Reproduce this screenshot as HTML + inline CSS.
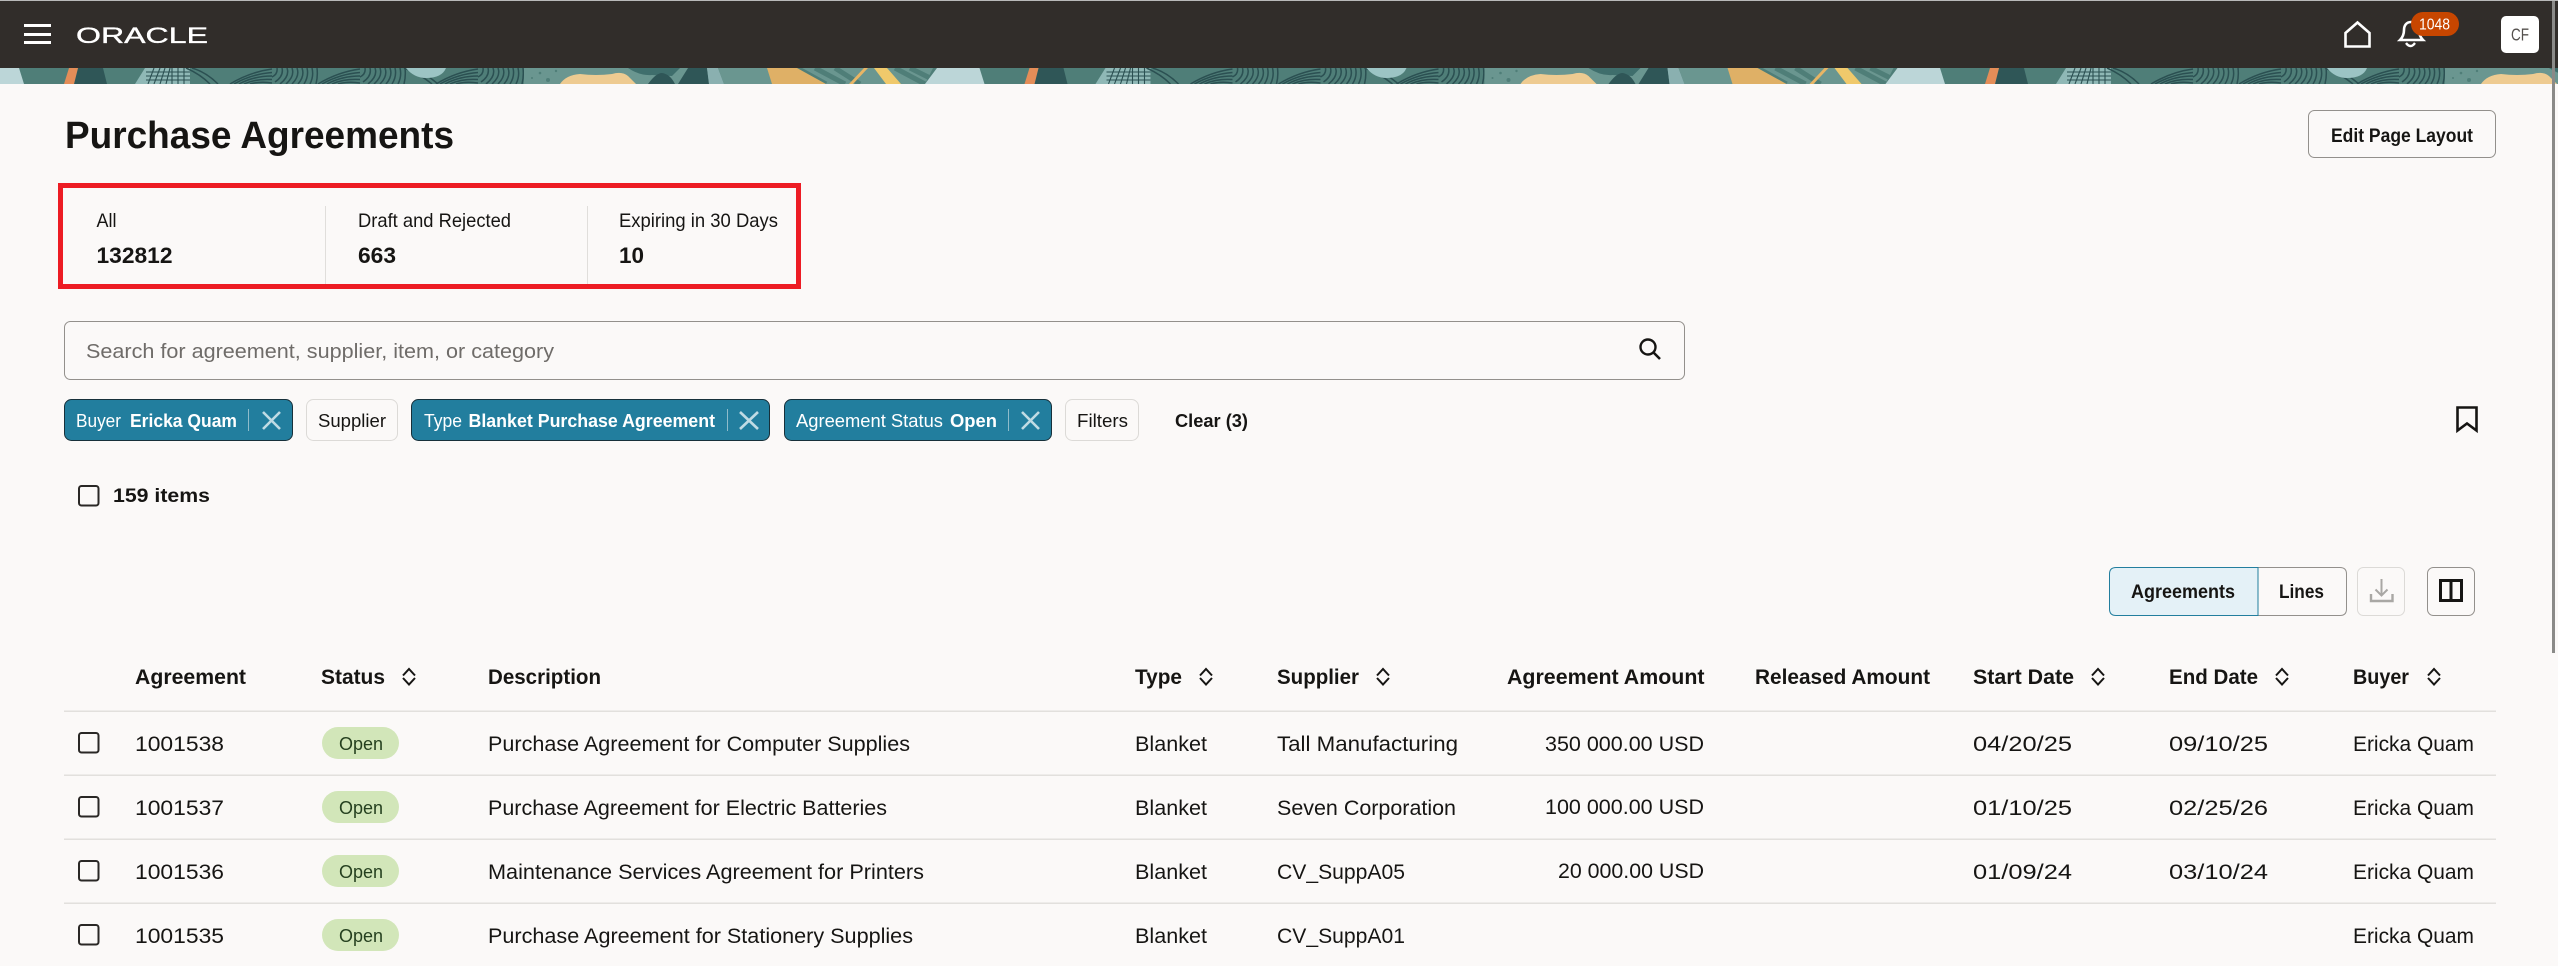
<!DOCTYPE html>
<html lang="en">
<head>
<meta charset="utf-8">
<title>Purchase Agreements</title>
<style>
html,body{margin:0;padding:0;background:#fbf9f8;overflow:hidden}
svg{display:block}
text{font-family:"Liberation Sans",Arial,sans-serif;fill:#161513;font-size:21px}
.b{font-weight:700}
.c{font-size:18.5px}
.w{fill:#fff;font-size:18.5px}
.h{font-size:21px;font-weight:700}
.o{font-size:18px;fill:#25401f}
.l{font-size:19.5px}
.v{font-size:22px;font-weight:700}
.m{font-size:19.5px;font-weight:700}
</style>
</head>
<body>
<svg xmlns="http://www.w3.org/2000/svg" width="2558" height="966" viewBox="0 0 2558 966">
<defs>
  <clipPath id="bn"><rect x="0" y="68" width="2558" height="16"/></clipPath>
  <g id="arcs" fill="none" stroke="#2b5052" stroke-width="1.5">
    <path d="M0 16Q20 4 42 1M4 16Q22 6 42 4.500M9 16Q24 8 42 8M14 16Q26 10.500 42 11.500M20 16Q30 13 42 15"/>
    <path d="M42 9Q48 6 47 0M45 14Q54 8 52 0M50 16Q60 8 57 0M56 16Q65 8 62 0M62 16Q70 8 67 0M68 16Q75 8 72 0M74 16Q79 8 77 0M80 16Q84 8 82 0M86 16Q88 8 87 0"/>
  </g>
  <g id="tile">
    <rect x="0" y="0" width="960.500" height="16" fill="#4f7e78"/>
    <polygon points="-23,0 19,0 24,16 -35,16" fill="#bcd6d8"/>
    <polygon points="78,0 103,0 107,16 74,16" fill="#2f5657"/>
    <polygon points="69,0 78,0 74,16 64,16" fill="#e48d58"/>
    <polygon points="145,0 190,0 190,16 135,16" fill="#8fb8b6"/>
    <path d="M148 16L154 0M154 16L160 0M160 16L165 0M166 16L170 0M172 16V0M178 16V0M184 16V0M146 4H190M146 8H190M146 12H190" stroke="#2b5052" stroke-width="1.100" fill="none"/>
    <path d="M186 0Q200 6 210 16M192 0Q206 4 218 16" stroke="#2b5052" stroke-width="1.500" fill="none"/>
    <use href="#arcs" x="230"/>
    <use href="#arcs" x="318"/>
    <path d="M404 0Q420 6 432 16M410 0Q424 4 438 16" stroke="#2b5052" stroke-width="1.500" fill="none"/>
    <path d="M406 0H446Q442 10 426 10Q414 10 406 0Z" fill="#9cc4c4"/>
    <use href="#arcs" x="436"/>
    <rect x="524" y="0" width="194" height="16" fill="#6a9690"/>
    <g fill="#4f7e78"><circle cx="548" cy="12" r="2"/><circle cx="540" cy="5" r="1.300"/><circle cx="556" cy="3" r="1.200"/><circle cx="532" cy="10" r="1"/><circle cx="726" cy="6" r="1.400"/><circle cx="738" cy="12" r="1"/><circle cx="752" cy="8" r="1"/></g>
    <path d="M628 0H680L672 8L652 7Q640 8 628 0Z" fill="#3f6e6c"/>
    <path d="M560 16Q566 7 580 6Q596 8 612 6Q622 3 628 8Q632 12 636 16Z" fill="#eecb91"/>
    <path d="M648 16Q656 5 662 5Q670 6 675 16Z" fill="#2f5657"/>
    <polygon points="688,0 707,0 709,16 678,16" fill="#2f5657"/>
    <polygon points="707,0 718,0 724,16 709,16" fill="#8ab0b0"/>
    <polygon points="718,0 933,0 925,16 724,16" fill="#6a9690"/>
    <path d="M797 0L826 16M815 0L845 16M835 0L860 16M895 0L925 16M910 0L930 10" stroke="#4f7e78" stroke-width="5" fill="none"/>
    <polygon points="767,0 797,0 826,16 772,16" fill="#dfb066"/>
    <polygon points="864,0 868,0 853,16 849,16" fill="#e8b565"/>
    <polygon points="874,0 887,0 901,16 886,16" fill="#f0c96b"/>
    <polygon points="937,0 980,0 985,16 925,16" fill="#bcd6d8"/>
  </g>
  <path id="s" d="M0 675.500L6 669L12 675.500M0 678L6 684.500L12 678" fill="none" stroke="#161513" stroke-width="2"/>
  <rect id="cb" x="79" y="0" width="19.500" height="19.500" rx="2.500" fill="none" stroke="#2a2826" stroke-width="2"/>
  <rect id="pill" x="322" y="0" width="77" height="32" rx="16" fill="#d2e6b9"/>
</defs>

<rect width="2558" height="966" fill="#fbf9f8"/>

<!-- header -->
<rect width="2558" height="68" fill="#312d2a"/>
<rect width="2558" height="1" fill="#b9b9b9"/>
<g clip-path="url(#bn)">
  <use href="#tile" x="-960.500" y="68"/>
  <use href="#tile" x="0" y="68"/>
  <use href="#tile" x="960.500" y="68"/>
  <use href="#tile" x="1921" y="68"/>
</g>
<g fill="#fff"><rect x="24" y="24" width="27" height="3"/><rect x="24" y="33" width="27" height="3"/><rect x="24" y="41" width="27" height="3"/></g>
<text x="76" y="43" textLength="132" lengthAdjust="spacingAndGlyphs" style="fill:#fff;font-size:22.500px;stroke:#fff;stroke-width:.35">ORACLE</text>
<path d="M2345.500 46.500V33L2357.500 22.500L2369.500 33V46.500Z" fill="none" stroke="#fff" stroke-width="2.600"/>
<path d="M2400 40H2423C2420 37 2419 34 2419 30C2419 25 2416 22 2411 22C2406 22 2404 26 2404 30C2404 34 2403 37 2400 40Z" fill="none" stroke="#fff" stroke-width="2.600"/>
<path d="M2406 43Q2410.500 49 2415 43" fill="none" stroke="#fff" stroke-width="2.400"/>
<rect x="2411" y="12" width="48" height="24" rx="12" fill="#c74600"/>
<text x="2419" y="29.500" textLength="31" lengthAdjust="spacingAndGlyphs" style="fill:#fff;font-size:16px">1048</text>
<rect x="2501" y="16" width="38" height="37" rx="5" fill="#fff"/>
<text x="2511" y="40.500" textLength="18" lengthAdjust="spacingAndGlyphs" style="fill:#55514e;font-size:17.500px">CF</text>

<!-- title -->
<text x="65" y="148" class="b" textLength="389" lengthAdjust="spacingAndGlyphs" style="font-size:38px">Purchase Agreements</text>
<rect x="2308.500" y="110.500" width="187" height="47" rx="6" fill="none" stroke="#93908c" stroke-width="1"/>
<text x="2331" y="142" class="m" textLength="142" lengthAdjust="spacingAndGlyphs">Edit Page Layout</text>

<!-- red box + tabs -->
<rect x="60.500" y="185.500" width="738" height="101" fill="none" stroke="#ed1c24" stroke-width="5"/>
<rect x="325" y="206" width="1" height="78" fill="#e0dedb"/>
<rect x="587" y="206" width="1" height="78" fill="#e0dedb"/>
<text x="96.500" y="227" class="l" textLength="20" lengthAdjust="spacingAndGlyphs">All</text>
<text x="358" y="227" class="l" textLength="153" lengthAdjust="spacingAndGlyphs">Draft and Rejected</text>
<text x="619" y="227" class="l" textLength="159" lengthAdjust="spacingAndGlyphs">Expiring in 30 Days</text>
<text x="96.500" y="263" class="v" textLength="76" lengthAdjust="spacingAndGlyphs">132812</text>
<text x="358" y="263" class="v" textLength="38" lengthAdjust="spacingAndGlyphs">663</text>
<text x="619" y="263" class="v" textLength="25" lengthAdjust="spacingAndGlyphs">10</text>

<!-- search -->
<rect x="64.500" y="321.500" width="1620" height="58" rx="6" fill="none" stroke="#93908c" stroke-width="1"/>
<text x="86" y="358" textLength="468" lengthAdjust="spacingAndGlyphs" style="fill:#6f6c69;font-size:20.500px">Search for agreement, supplier, item, or category</text>
<circle cx="1648" cy="347" r="7.500" fill="none" stroke="#161513" stroke-width="2.400"/>
<path d="M1653.500 352.500L1660 359" stroke="#161513" stroke-width="2.600" fill="none"/>

<!-- chips -->
<g fill="#227e9e" stroke="#17303a" stroke-width="1">
  <rect x="64.500" y="399.500" width="228" height="41" rx="7"/>
  <rect x="411.500" y="399.500" width="358" height="41" rx="7"/>
  <rect x="784.500" y="399.500" width="267" height="41" rx="7"/>
</g>
<g fill="#fbf9f8" stroke="#dcdad7" stroke-width="1">
  <rect x="306.500" y="399.500" width="91" height="41" rx="7"/>
  <rect x="1065.500" y="399.500" width="73" height="41" rx="7"/>
</g>
<text x="76" y="427" class="w" textLength="45" lengthAdjust="spacingAndGlyphs">Buyer</text>
<text x="130" y="427" class="w b" textLength="107" lengthAdjust="spacingAndGlyphs">Ericka Quam</text>
<text x="318" y="427" class="c" textLength="68" lengthAdjust="spacingAndGlyphs">Supplier</text>
<text x="424" y="427" class="w" textLength="38" lengthAdjust="spacingAndGlyphs">Type</text>
<text x="468.500" y="427" class="w b" textLength="246.500" lengthAdjust="spacingAndGlyphs">Blanket Purchase Agreement</text>
<text x="796" y="427" class="w" textLength="147" lengthAdjust="spacingAndGlyphs">Agreement Status</text>
<text x="950" y="427" class="w b" textLength="47" lengthAdjust="spacingAndGlyphs">Open</text>
<text x="1077" y="427" class="c" textLength="51" lengthAdjust="spacingAndGlyphs">Filters</text>
<text x="1175" y="427" class="c b" textLength="73" lengthAdjust="spacingAndGlyphs">Clear (3)</text>
<g fill="#8fbccb">
  <rect x="248" y="409" width="1" height="22"/><rect x="727" y="409" width="1" height="22"/><rect x="1008" y="409" width="1" height="22"/>
</g>
<path d="M263 412L280 429M280 412L263 429M740 412L758 429M758 412L740 429M1022 412L1039 429M1039 412L1022 429" fill="none" stroke="#c0dbe4" stroke-width="2.600"/>

<!-- bookmark -->
<path d="M2457.500 407.500H2476.500V430.500L2467 423.500L2457.500 430.500Z" fill="none" stroke="#161513" stroke-width="2.600"/>

<!-- items -->
<use href="#cb" y="486"/>
<text x="113" y="502" class="m" textLength="97" lengthAdjust="spacingAndGlyphs">159 items</text>

<!-- toolbar -->
<path d="M2258 615.500H2340Q2346.500 615.500 2346.500 609V574Q2346.500 567.500 2340 567.500H2258" fill="#fbf9f8" stroke="#93908c" stroke-width="1"/>
<path d="M2258 567.500H2116Q2109.500 567.500 2109.500 574V609Q2109.500 615.500 2116 615.500H2258Z" fill="#e4f1f7" stroke="#227e9e" stroke-width="1"/>
<text x="2131" y="598" class="m" textLength="104" lengthAdjust="spacingAndGlyphs">Agreements</text>
<text x="2279" y="598" class="m" textLength="45" lengthAdjust="spacingAndGlyphs">Lines</text>
<rect x="2357.500" y="567.500" width="47" height="48" rx="6" fill="none" stroke="#dcdad7" stroke-width="1"/>
<path d="M2381.500 579V595M2375.500 589.500L2381.500 595.500L2387.500 589.500" fill="none" stroke="#a9a7a4" stroke-width="2"/>
<path d="M2371 594V601H2392.500V594" fill="none" stroke="#a9a7a4" stroke-width="2.400"/>
<rect x="2427.500" y="567.500" width="47" height="48" rx="6" fill="none" stroke="#93908c" stroke-width="1"/>
<path d="M2440.500 580.500H2461.500V600.500H2440.500ZM2451 580.500V600.500" fill="none" stroke="#161513" stroke-width="3"/>

<!-- table head -->
<text x="135" y="684" class="h" textLength="111" lengthAdjust="spacingAndGlyphs">Agreement</text>
<text x="321" y="684" class="h" textLength="64" lengthAdjust="spacingAndGlyphs">Status</text>
<use href="#s" x="403"/>
<text x="488" y="684" class="h" textLength="113" lengthAdjust="spacingAndGlyphs">Description</text>
<text x="1135" y="684" class="h" textLength="47" lengthAdjust="spacingAndGlyphs">Type</text>
<use href="#s" x="1200"/>
<text x="1277" y="684" class="h" textLength="82" lengthAdjust="spacingAndGlyphs">Supplier</text>
<use href="#s" x="1377"/>
<text x="1507" y="684" class="h" textLength="197.500" lengthAdjust="spacingAndGlyphs">Agreement Amount</text>
<text x="1755" y="684" class="h" textLength="175" lengthAdjust="spacingAndGlyphs">Released Amount</text>
<text x="1973" y="684" class="h" textLength="101" lengthAdjust="spacingAndGlyphs">Start Date</text>
<use href="#s" x="2092"/>
<text x="2169" y="684" class="h" textLength="89" lengthAdjust="spacingAndGlyphs">End Date</text>
<use href="#s" x="2276"/>
<text x="2353" y="684" class="h" textLength="56" lengthAdjust="spacingAndGlyphs">Buyer</text>
<use href="#s" x="2428"/>

<!-- row lines -->
<g fill="#e2e0dd">
  <rect x="64" y="710.500" width="2432" height="1.500"/>
  <rect x="64" y="774.500" width="2432" height="1.500"/>
  <rect x="64" y="838.500" width="2432" height="1.500"/>
  <rect x="64" y="902.500" width="2432" height="1.500"/>
</g>

<!-- row 1 -->
<use href="#cb" y="733"/>
<text x="135" y="751" textLength="89" lengthAdjust="spacingAndGlyphs">1001538</text>
<use href="#pill" y="727"/>
<text x="339" y="750" class="o" textLength="44" lengthAdjust="spacingAndGlyphs">Open</text>
<text x="488" y="751" textLength="422" lengthAdjust="spacingAndGlyphs">Purchase Agreement for Computer Supplies</text>
<text x="1135" y="751" textLength="72" lengthAdjust="spacingAndGlyphs">Blanket</text>
<text x="1277" y="751" textLength="181" lengthAdjust="spacingAndGlyphs">Tall Manufacturing</text>
<text x="1545" y="751" textLength="159" lengthAdjust="spacingAndGlyphs">350 000.00 USD</text>
<text x="1973" y="751" textLength="99" lengthAdjust="spacingAndGlyphs">04/20/25</text>
<text x="2169" y="751" textLength="99" lengthAdjust="spacingAndGlyphs">09/10/25</text>
<text x="2353" y="751" textLength="121" lengthAdjust="spacingAndGlyphs">Ericka Quam</text>

<!-- row 2 -->
<use href="#cb" y="797"/>
<text x="135" y="815" textLength="89" lengthAdjust="spacingAndGlyphs">1001537</text>
<use href="#pill" y="791"/>
<text x="339" y="814" class="o" textLength="44" lengthAdjust="spacingAndGlyphs">Open</text>
<text x="488" y="815" textLength="399" lengthAdjust="spacingAndGlyphs">Purchase Agreement for Electric Batteries</text>
<text x="1135" y="815" textLength="72" lengthAdjust="spacingAndGlyphs">Blanket</text>
<text x="1277" y="815" textLength="179" lengthAdjust="spacingAndGlyphs">Seven Corporation</text>
<text x="1545" y="814" textLength="159" lengthAdjust="spacingAndGlyphs">100 000.00 USD</text>
<text x="1973" y="815" textLength="99" lengthAdjust="spacingAndGlyphs">01/10/25</text>
<text x="2169" y="815" textLength="99" lengthAdjust="spacingAndGlyphs">02/25/26</text>
<text x="2353" y="815" textLength="121" lengthAdjust="spacingAndGlyphs">Ericka Quam</text>

<!-- row 3 -->
<use href="#cb" y="861"/>
<text x="135" y="879" textLength="89" lengthAdjust="spacingAndGlyphs">1001536</text>
<use href="#pill" y="855"/>
<text x="339" y="878" class="o" textLength="44" lengthAdjust="spacingAndGlyphs">Open</text>
<text x="488" y="879" textLength="436" lengthAdjust="spacingAndGlyphs">Maintenance Services Agreement for Printers</text>
<text x="1135" y="879" textLength="72" lengthAdjust="spacingAndGlyphs">Blanket</text>
<text x="1277" y="879" textLength="128" lengthAdjust="spacingAndGlyphs">CV_SuppA05</text>
<text x="1558" y="878" textLength="146" lengthAdjust="spacingAndGlyphs">20 000.00 USD</text>
<text x="1973" y="879" textLength="99" lengthAdjust="spacingAndGlyphs">01/09/24</text>
<text x="2169" y="879" textLength="99" lengthAdjust="spacingAndGlyphs">03/10/24</text>
<text x="2353" y="879" textLength="121" lengthAdjust="spacingAndGlyphs">Ericka Quam</text>

<!-- row 4 -->
<use href="#cb" y="925"/>
<text x="135" y="943" textLength="89" lengthAdjust="spacingAndGlyphs">1001535</text>
<use href="#pill" y="919"/>
<text x="339" y="942" class="o" textLength="44" lengthAdjust="spacingAndGlyphs">Open</text>
<text x="488" y="943" textLength="425" lengthAdjust="spacingAndGlyphs">Purchase Agreement for Stationery Supplies</text>
<text x="1135" y="943" textLength="72" lengthAdjust="spacingAndGlyphs">Blanket</text>
<text x="1277" y="943" textLength="128" lengthAdjust="spacingAndGlyphs">CV_SuppA01</text>
<text x="2353" y="943" textLength="121" lengthAdjust="spacingAndGlyphs">Ericka Quam</text>

<!-- scrollbar -->
<rect x="2552" y="1" width="3" height="652" fill="#8a8a88"/>
</svg>
</body>
</html>
